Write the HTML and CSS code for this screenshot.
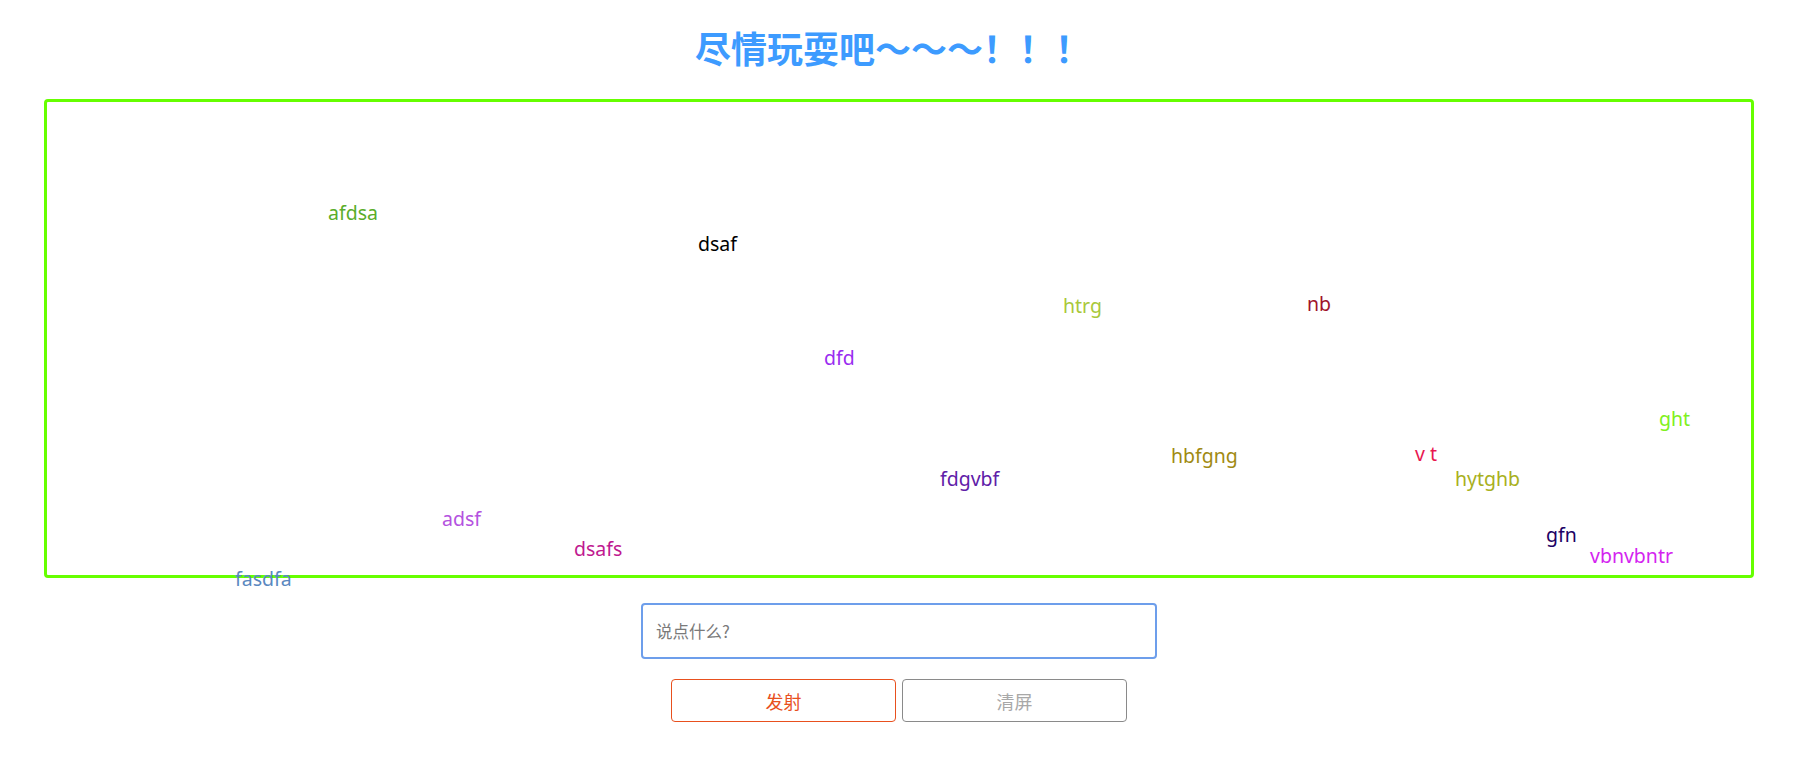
FILE: index.html
```html
<!DOCTYPE html>
<html lang="zh-CN">
<head>
<meta charset="utf-8">
<title>弹幕</title>
<link rel="stylesheet" href="styles.css">
</head>
<body>
<div class="page">
  <h1 class="title">尽情玩耍吧～～～！！！</h1>
  <div class="stage">
    <span class="dm" style="left:281px;top:99px;color:#5aad2a">afdsa</span>
    <span class="dm" style="left:651px;top:130px;color:#000000">dsaf</span>
    <span class="dm" style="left:1016px;top:192px;color:#a9c83a">htrg</span>
    <span class="dm" style="left:1260px;top:190px;color:#a0142c">nb</span>
    <span class="dm" style="left:777px;top:244px;color:#9a2cf0">dfd</span>
    <span class="dm" style="left:1612px;top:305px;color:#80f020">ght</span>
    <span class="dm" style="left:1124px;top:342px;color:#a08a12">hbfgng</span>
    <span class="dm" style="left:1368px;top:340px;color:#e81850">v t</span>
    <span class="dm" style="left:1408px;top:365px;color:#a8b020">hytghb</span>
    <span class="dm" style="left:893px;top:365px;color:#6020a8">fdgvbf</span>
    <span class="dm" style="left:395px;top:405px;color:#b452e0">adsf</span>
    <span class="dm" style="left:527px;top:435px;color:#c01890">dsafs</span>
    <span class="dm" style="left:1499px;top:421px;color:#200064">gfn</span>
    <span class="dm" style="left:1543px;top:442px;color:#d424f0">vbnvbntr</span>
    <span class="dm" style="left:188px;top:465px;color:#5a88c0">fasdfa</span>
  </div>
  <input class="say" type="text" placeholder="说点什么?">
  <div class="actions">
    <button class="btn btn-fire">发射</button>
    <button class="btn btn-clear">清屏</button>
  </div>
</div>
</body>
</html>
```
FILE: styles.css
```css
html, body {
  margin: 0;
  padding: 0;
  background: #ffffff;
}

body {
  font-family: "Noto Sans", "Noto Sans CJK SC", sans-serif;
}

.page {
  width: 1710px;
  margin-left: 44px;
  display: flex;
  flex-direction: column;
  align-items: center;
}

.title {
  margin: 21px 12px 26px 0;
  font-family: "Noto Sans CJK SC", sans-serif;
  font-size: 36px;
  line-height: 52px;
  font-weight: 700;
  color: #3d9bff;
}

.stage {
  position: relative;
  box-sizing: border-box;
  width: 100%;
  height: 479px;
  border: 3px solid #66ff00;
  border-radius: 4px;
}

.dm {
  position: absolute;
  font-size: 19.5px;
  line-height: 24px;
  white-space: pre;
}

.say {
  box-sizing: border-box;
  width: 516px;
  height: 56px;
  margin-top: 25px;
  padding: 0 13px;
  border: 2px solid #6d9eeb;
  border-radius: 4px;
  font-family: "Noto Sans CJK SC", sans-serif;
  font-size: 16.5px;
  outline: none;
}

.say::placeholder {
  color: #7a7a7a;
}

.actions {
  display: flex;
  gap: 6px;
  margin-top: 20px;
}

.btn {
  box-sizing: border-box;
  width: 225px;
  height: 43px;
  background: #ffffff;
  border-radius: 4px;
  font-family: "Noto Sans CJK SC", sans-serif;
  font-size: 18px;
  cursor: pointer;
}

.btn-fire {
  border: 1px solid #e8501e;
  color: #e8501e;
}

.btn-clear {
  border: 1px solid #8a8a8a;
  color: #a8a8a8;
}
```
